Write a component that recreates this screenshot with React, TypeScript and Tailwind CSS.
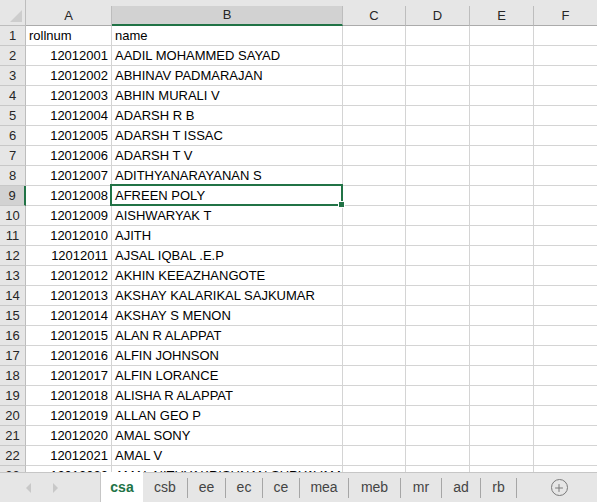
import { Plus } from 'lucide-react';

const rows: [string, string][] = [
  ['rollnum', 'name'],
  ['12012001', 'AADIL MOHAMMED SAYAD'],
  ['12012002', 'ABHINAV PADMARAJAN'],
  ['12012003', 'ABHIN MURALI V'],
  ['12012004', 'ADARSH R B'],
  ['12012005', 'ADARSH T ISSAC'],
  ['12012006', 'ADARSH T V'],
  ['12012007', 'ADITHYANARAYANAN S'],
  ['12012008', 'AFREEN POLY'],
  ['12012009', 'AISHWARYAK T'],
  ['12012010', 'AJITH'],
  ['12012011', 'AJSAL IQBAL .E.P'],
  ['12012012', 'AKHIN KEEAZHANGOTE'],
  ['12012013', 'AKSHAY KALARIKAL SAJKUMAR'],
  ['12012014', 'AKSHAY S MENON'],
  ['12012015', 'ALAN R ALAPPAT'],
  ['12012016', 'ALFIN JOHNSON'],
  ['12012017', 'ALFIN LORANCE'],
  ['12012018', 'ALISHA R ALAPPAT'],
  ['12012019', 'ALLAN GEO P'],
  ['12012020', 'AMAL SONY'],
  ['12012021', 'AMAL V'],
  ['12012022', 'AMAL NITHYAKRISHNAN SURYAVAMSAN'],
];

const columns = ['A', 'B', 'C', 'D', 'E', 'F'];

const tabs = [
  { name: 'csa', w: 'w-[43px]' },
  { name: 'csb', w: 'w-[45px]' },
  { name: 'ee', w: 'w-[38px]' },
  { name: 'ec', w: 'w-[37px]' },
  { name: 'ce', w: 'w-[37px]' },
  { name: 'mea', w: 'w-[49px]' },
  { name: 'meb', w: 'w-[52px]' },
  { name: 'mr', w: 'w-[41px]' },
  { name: 'ad', w: 'w-[39px]' },
  { name: 'rb', w: 'w-[36px]' },
];

const SELECTED_ROW = 9;

function SheetGrid() {
  return (
    <div className="relative flex-1 overflow-hidden">
      <div className="grid grid-cols-[26px_86px_231px_63px_64px_64px_64px] grid-rows-[26px_repeat(23,20px)] text-[13px] text-black">
        {/* select-all corner */}
        <div className="relative bg-[#e6e6e6] border-r border-b border-[#bdbdbd]">
          <svg className="absolute right-[3px] bottom-[3px]" width="12" height="12" viewBox="0 0 12 12">
            <polygon points="12,0 12,12 0,12" fill="#cdcdcd" />
          </svg>
        </div>

        {/* column headers */}
        {columns.map((c) => (
          <div key={c} className="bg-[#e6e6e6] pt-[6px]">
            {c === 'B' ? (
              <div className="h-full flex items-center justify-center bg-[#d2d2d2] border-r border-[#bdbdbd] border-b-2 border-b-[#217346] text-[#262626]">
                {c}
              </div>
            ) : (
              <div className="h-full flex items-center justify-center border-r border-[#bdbdbd] border-b border-b-[#ababab] text-[#262626]">
                {c}
              </div>
            )}
          </div>
        ))}

        {/* rows */}
        {rows.map(([roll, name], i) => {
          const n = i + 1;
          const sel = n === SELECTED_ROW;
          return [
            <div
              key={`h${n}`}
              className={
                sel
                  ? 'flex items-center justify-center bg-[#d2d2d2] border-r-2 border-r-[#217346] border-b border-b-[#c8c8c8] text-[#262626]'
                  : 'flex items-center justify-center bg-[#e6e6e6] border-r border-r-[#bdbdbd] border-b border-b-[#c8c8c8] text-[#262626]'
              }
            >
              {n}
            </div>,
            <div
              key={`a${n}`}
              className={
                n === 1
                  ? 'flex items-center pl-[3px] border-r border-b border-[#d4d4d4] whitespace-nowrap'
                  : 'flex items-center justify-end pr-[3px] border-r border-b border-[#d4d4d4] whitespace-nowrap'
              }
            >
              {roll}
            </div>,
            <div key={`b${n}`} className="flex items-center pl-[3px] border-r border-b border-[#d4d4d4] whitespace-nowrap overflow-hidden">
              {name}
            </div>,
            <div key={`c${n}`} className="border-r border-b border-[#d4d4d4]" />,
            <div key={`d${n}`} className="border-r border-b border-[#d4d4d4]" />,
            <div key={`e${n}`} className="border-r border-b border-[#d4d4d4]" />,
            <div key={`f${n}`} className="border-r border-b border-[#d4d4d4]" />,
          ];
        })}
      </div>

      {/* active cell B9 */}
      <div className="absolute left-[110px] top-[184px] w-[233px] h-[22px] border-2 border-[#217346] pointer-events-none" />
      <div className="absolute left-[338px] top-[201px] w-[7px] h-[7px] bg-[#217346] border border-white" />
    </div>
  );
}

function TabBar() {
  return (
    <div className="h-[30px] shrink-0 flex bg-[#e6e6e6] text-[14px] text-[#444]">
      <div className="w-[100px] flex items-center gap-[22px] pl-[26px] border-t border-[#c6c6c6]">
        <span className="w-0 h-0 border-y-[5px] border-y-transparent border-r-[5px] border-r-[#c8c8c8]" />
        <span className="w-0 h-0 border-y-[5px] border-y-transparent border-l-[5px] border-l-[#c8c8c8]" />
      </div>
      {tabs.map((t, i) =>
        i === 0 ? (
          <div
            key={t.name}
            className={`${t.w} flex items-center justify-center bg-white border-l border-[#c6c6c6] font-bold text-[#217346]`}
          >
            {t.name}
          </div>
        ) : (
          <div key={t.name} className={`${t.w} flex items-center border-t border-[#c6c6c6]`}>
            <span className="flex-1 text-center">{t.name}</span>
            <span className="w-px h-[20px] bg-[#a6a6a6]" />
          </div>
        ),
      )}
      <div className="flex-1 flex items-center justify-center pl-[4px] border-t border-[#c6c6c6]">
        <span className="w-[17px] h-[17px] rounded-full border border-[#7a7a7a] flex items-center justify-center">
          <Plus className="w-[12px] h-[12px] text-[#7a7a7a]" strokeWidth={2} />
        </span>
      </div>
    </div>
  );
}

export default function App() {
  return (
    <div className="w-[597px] h-[502px] overflow-hidden flex flex-col bg-white font-['Liberation_Sans',Arial,sans-serif]">
      <SheetGrid />
      <TabBar />
    </div>
  );
}
